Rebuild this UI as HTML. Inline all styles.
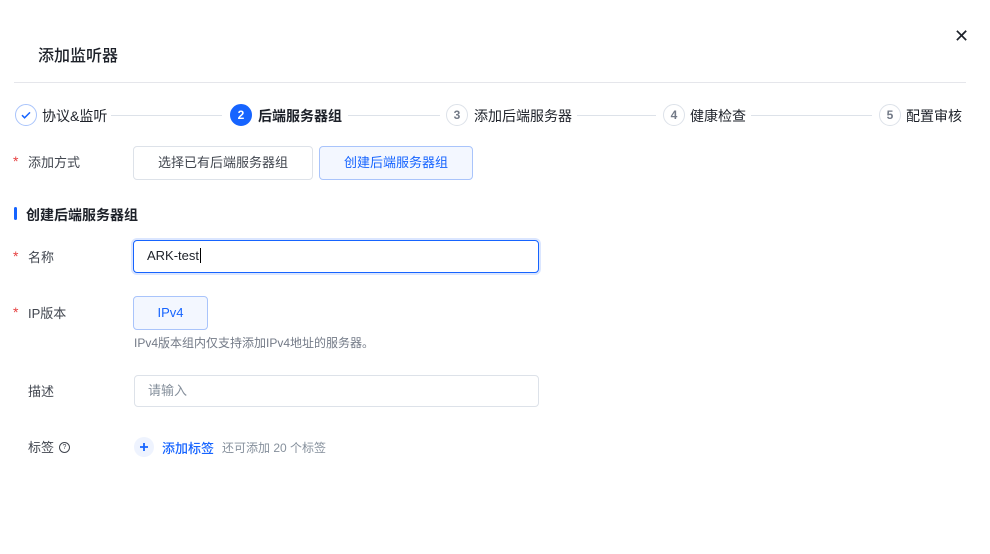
<!DOCTYPE html><html><head><meta charset="utf-8"><style>
body{margin:0;width:990px;height:554px;background:#fff;font-family:"Liberation Sans","Noto Sans CJK SC",sans-serif;position:relative;overflow:hidden;color:#1d2129}
.a{position:absolute;white-space:nowrap}
.c{position:absolute;width:20px;height:20px;border:1.5px solid #dde2e9;border-radius:50%;top:104px;font-size:12px;font-weight:bold;color:#737a87;text-align:center;line-height:20px;background:#fff}
.ln{position:absolute;top:115px;height:1px;background:#dde2e9}
.st{position:absolute;top:106px;font-size:14px;color:#1d2129}
.lbl{position:absolute;font-size:13px;color:#41464f}
.req{position:absolute;color:#e63f3f;font-size:14px;left:13px}
.btn{position:absolute;border:1px solid #dde2e9;border-radius:4px;font-size:13px;text-align:center;box-sizing:border-box}
.sel{background:#f3f7ff;border-color:#a9c4fb;color:#1664ff}
</style></head><body>
<div class="a" style="left:38px;top:42px;font-size:16px;font-weight:500">添加监听器</div>
<div class="a" style="left:954px;top:26px;font-size:18px">✕</div>
<div class="a" style="left:14px;top:82px;width:952px;height:1px;background:#e5e6eb"></div>

<div class="c" style="left:15px;border-color:#a9c4fb;color:#1664ff"><svg width="12" height="12" viewBox="0 0 12 12" style="margin-top:4px"><path d="M2 6.2l2.6 2.6L10 3.4" stroke="#1664ff" stroke-width="1.5" fill="none"/></svg></div>
<div class="st" style="left:42px">协议&amp;监听</div>
<div class="ln" style="left:111px;width:111px"></div>
<div class="c" style="left:230px;background:#1664ff;border-color:#1664ff;color:#fff">2</div>
<div class="st" style="left:258px;font-weight:bold">后端服务器组</div>
<div class="ln" style="left:348px;width:92px"></div>
<div class="c" style="left:446px">3</div>
<div class="st" style="left:474px">添加后端服务器</div>
<div class="ln" style="left:577px;width:79px"></div>
<div class="c" style="left:663px">4</div>
<div class="st" style="left:690px">健康检查</div>
<div class="ln" style="left:751px;width:121px"></div>
<div class="c" style="left:879px">5</div>
<div class="st" style="left:906px">配置审核</div>

<div class="req" style="top:153px">*</div><div class="lbl" style="left:28px;top:152px">添加方式</div>
<div class="btn" style="left:133px;top:146px;width:180px;height:34px;line-height:32px;color:#41464f">选择已有后端服务器组</div>
<div class="btn sel" style="left:319px;top:146px;width:154px;height:34px;line-height:32px">创建后端服务器组</div>

<div class="a" style="left:14px;top:207px;width:3px;height:13px;background:#1664ff;border-radius:2px"></div>
<div class="a" style="left:26px;top:205px;font-size:14px;font-weight:bold">创建后端服务器组</div>

<div class="req" style="top:248px">*</div><div class="lbl" style="left:28px;top:247px">名称</div>
<div class="a" style="left:133px;top:240px;width:406px;height:33px;box-sizing:border-box;border:1.5px solid #1664ff;border-radius:4px;box-shadow:0 0 0 2px #dbe6ff;font-size:13px;padding-left:13px;line-height:30px">ARK-test<span style="border-left:1px solid #000;margin-left:1px"></span></div>

<div class="req" style="top:304px">*</div><div class="lbl" style="left:28px;top:303px">IP版本</div>
<div class="btn sel" style="left:133px;top:296px;width:75px;height:34px;line-height:32px">IPv4</div>
<div class="a" style="left:134px;top:334px;font-size:12px;color:#737a87">IPv4版本组内仅支持添加IPv4地址的服务器。</div>

<div class="lbl" style="left:28px;top:381px">描述</div>
<div class="a" style="left:134px;top:375px;width:405px;height:32px;box-sizing:border-box;border:1px solid #dde2e9;border-radius:4px;font-size:13px;padding-left:13px;line-height:30px;color:#86909c">请输入</div>

<div class="lbl" style="left:28px;top:437px">标签</div>
<div class="a" style="left:59px;top:442px;width:9px;height:9px;border:1px solid #41464f;border-radius:50%;font-size:7px;line-height:9px;text-align:center;color:#41464f">?</div>
<svg class="a" style="left:134px;top:437px" width="20" height="20" viewBox="0 0 20 20"><circle cx="10" cy="10" r="10" fill="#eef3fe"/><path d="M10 6v8M6 10h8" stroke="#1664ff" stroke-width="1.8"/></svg>
<div class="a" style="left:162px;top:438px;font-size:13px;color:#1664ff;font-weight:500">添加标签</div>
<div class="a" style="left:222px;top:439px;font-size:12px;color:#86909c">还可添加 20 个标签</div>
</body></html>
